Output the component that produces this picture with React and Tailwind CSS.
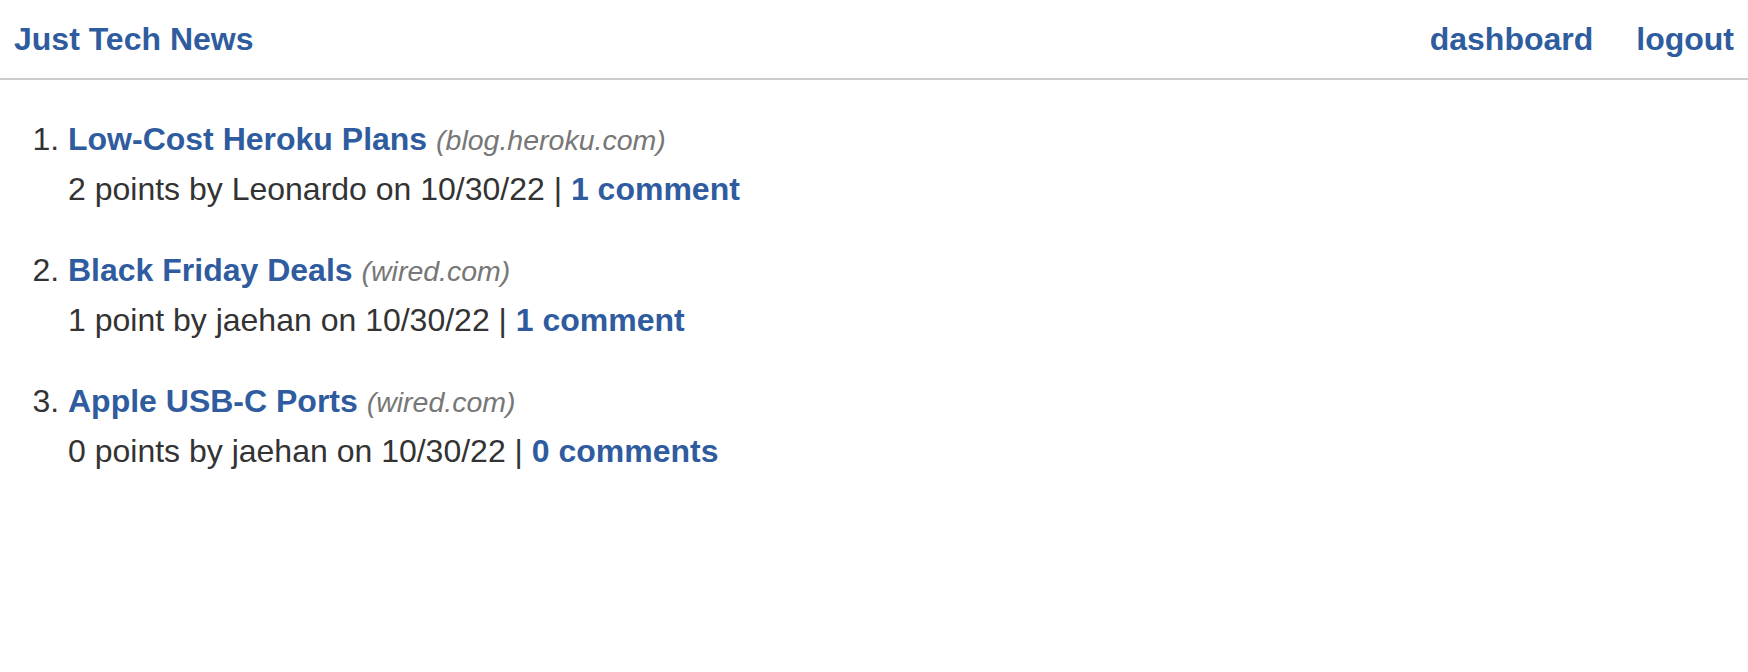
import React from 'react';

const posts = [
  { title: 'Low-Cost Heroku Plans', domain: 'blog.heroku.com', points: '2 points', user: 'Leonardo', date: '10/30/22', comments: '1 comment' },
  { title: 'Black Friday Deals', domain: 'wired.com', points: '1 point', user: 'jaehan', date: '10/30/22', comments: '1 comment' },
  { title: 'Apple USB-C Ports', domain: 'wired.com', points: '0 points', user: 'jaehan', date: '10/30/22', comments: '0 comments' },
];

export default function App() {
  return (
    <div className="min-h-[672px] bg-white text-[#333] font-['Liberation_Sans',Arial,sans-serif]">
      <header className="flex justify-between items-start h-[80px] px-[14px] pt-[15px] border-b-2 border-[#cccccc]">
        <a href="#" className="text-[32px] font-bold text-[#2e5c9e] leading-normal">Just Tech News</a>
        <nav className="flex gap-[43px]">
          <a href="#" className="text-[32px] font-bold text-[#2e5c9e] leading-normal">dashboard</a>
          <a href="#" className="text-[32px] font-bold text-[#2e5c9e] leading-normal">logout</a>
        </nav>
      </header>

      {/* posts */}
      <ol className="list-decimal pl-[68px] pt-[35px] text-[32px]">
        {posts.map((post) => (
          <li key={post.title} className="mb-[32px]">
            <div className="leading-[49px]">
              <a href="#" className="font-bold text-[#2e5c9e]">{post.title}</a>{' '}
              <span className="text-[28.5px] italic text-[#777]">({post.domain})</span>
            </div>
            <div className="leading-[49px]">
              {post.points} by {post.user} on {post.date} |{' '}
              <a href="#" className="font-bold text-[#2e5c9e]">{post.comments}</a>
            </div>
          </li>
        ))}
      </ol>
    </div>
  );
}
